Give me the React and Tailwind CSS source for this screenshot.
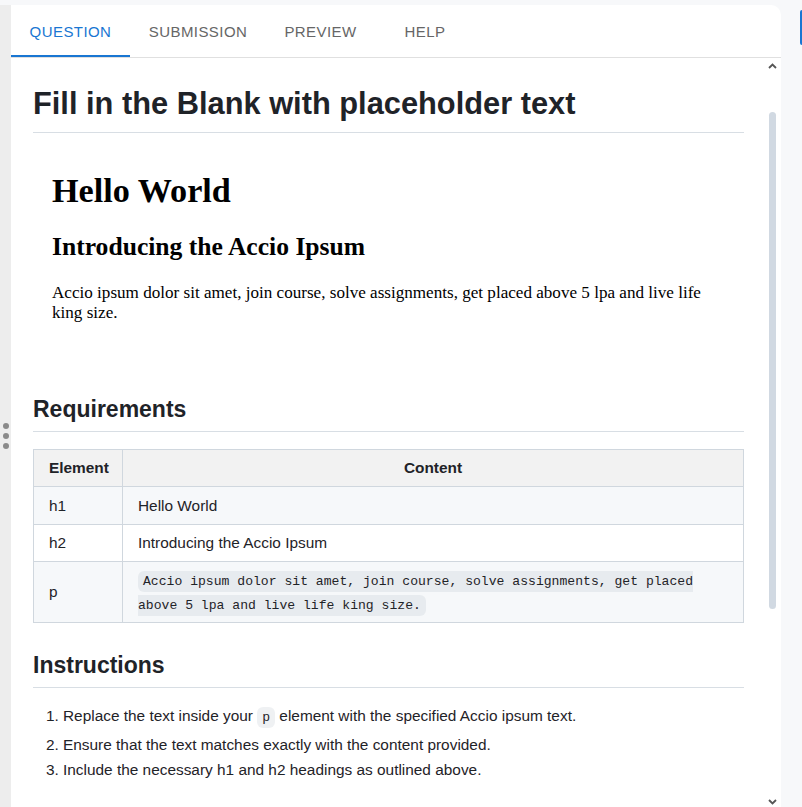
import React from 'react';

const tabs = [
  { label: 'Question', width: 'w-[119px]', active: true },
  { label: 'Submission', width: 'w-[136px]' },
  { label: 'Preview', width: 'w-[109px]' },
  { label: 'Help', width: 'w-[100px]' },
];

const rows = [
  { el: 'h1', content: 'Hello World', bg: 'bg-[#f6f8fa]', pad: 'py-[9.5px]' },
  { el: 'h2', content: 'Introducing the Accio Ipsum', bg: 'bg-white', pad: 'py-[9px]' },
];

function Chevron({ down }) {
  return (
    <svg width="9" height="6" viewBox="0 0 9 6" className={down ? 'rotate-180' : ''}>
      <path d="M1 5 L4.5 1.5 L8 5" fill="none" stroke="#555" strokeWidth="1.8" />
    </svg>
  );
}

function Code({ children, className = '' }) {
  return (
    <code
      className={`font-['Liberation_Mono',monospace] text-[13.1px] bg-[#afb8c133] rounded-md px-[5px] py-[3px] [box-decoration-break:slice] ${className}`}
    >
      {children}
    </code>
  );
}

export default function App() {
  return (
    <div className="w-[802px] h-[807px] bg-[#f7f8fa] flex overflow-hidden font-['Liberation_Sans',Arial,sans-serif] text-[#1f2328]">
      {/* resize handle strip */}
      <div className="w-[11px] mt-[5px] bg-[#ededed] flex flex-col items-center pt-[418px] gap-[4px]">
        <span className="w-[6px] h-[6px] rounded-full bg-[#8a8a8a]" />
        <span className="w-[6px] h-[6px] rounded-full bg-[#8a8a8a]" />
        <span className="w-[6px] h-[6px] rounded-full bg-[#8a8a8a]" />
      </div>

      <div className="w-[770px] mt-[5px] bg-white rounded-tr-[10px] flex flex-col">
        {/* tabs */}
        <div className="h-[53px] shrink-0 border-b border-[#e0e0e0] flex">
          {tabs.map((t) => (
            <div
              key={t.label}
              className={`${t.width} relative flex items-center justify-center pt-[2px] text-[15px] uppercase tracking-[0.02857em] ${
                t.active ? 'text-[#1976d2]' : 'text-[#666666]'
              }`}
            >
              {t.label}
              {t.active && <span className="absolute left-0 right-0 bottom-0 h-[2px] bg-[#1976d2]" />}
            </div>
          ))}
        </div>

        <div className="flex-1 flex overflow-hidden">
          <div className="w-[753px] pl-[22px] pr-[20px] pt-[26px] flex flex-col">
            <h1 className="text-[30.8px] leading-[39px] font-bold pb-[9px] border-b border-[#d8dee4]">
              Fill in the Blank with placeholder text
            </h1>

            {/* rendered preview */}
            <div className="px-[19px] pt-[39px] font-['Liberation_Serif','Times_New_Roman',serif] text-black">
              <h1 className="text-[34.2px] leading-[38px] font-bold">Hello World</h1>
              <h2 className="mt-[22px] text-[25.6px] leading-[29px] font-bold">Introducing the Accio Ipsum</h2>
              <p className="mt-[22px] text-[17.1px] leading-[20px]">
                Accio ipsum dolor sit amet, join course, solve assignments, get placed above 5 lpa and live life king size.
              </p>
            </div>

            <h2 className="mt-[72px] text-[23px] leading-[29px] font-bold pb-[7px] border-b border-[#d8dee4]">
              Requirements
            </h2>

            <table className="mt-[17px] w-full table-fixed border-collapse text-[15.4px]">
              <thead>
                <tr className="bg-[#f2f2f2]">
                  <th className="w-[89px] border border-[#d0d7de] px-[15px] py-[9px] leading-[18px] text-left font-bold">
                    Element
                  </th>
                  <th className="border border-[#d0d7de] px-[15px] py-[9px] leading-[18px] text-center font-bold">
                    Content
                  </th>
                </tr>
              </thead>
              <tbody>
                {rows.map((r) => (
                  <tr key={r.el} className={r.bg}>
                    <td className={`border border-[#d0d7de] px-[15px] ${r.pad} leading-[18px]`}>{r.el}</td>
                    <td className={`border border-[#d0d7de] px-[15px] ${r.pad} leading-[18px]`}>{r.content}</td>
                  </tr>
                ))}
                <tr className="bg-[#f6f8fa]">
                  <td className="border border-[#d0d7de] px-[15px] py-[6px] leading-[24px] align-middle">p</td>
                  <td className="border border-[#d0d7de] px-[15px] pt-[8px] pb-[4px] font-['Liberation_Mono',monospace] text-[13.1px] leading-[24px]">
                    <Code>
                      Accio ipsum dolor sit amet, join course, solve assignments, get placed above 5 lpa and live life king size.
                    </Code>
                  </td>
                </tr>
              </tbody>
            </table>

            <h2 className="mt-[28px] text-[23px] leading-[29px] font-bold pb-[7px] border-b border-[#d8dee4]">
              Instructions
            </h2>

            <ol className="mt-[16px] pl-[30px] list-decimal text-[15.4px] leading-[24px]">
              <li>
                Replace the text inside your <Code className="px-[4.5px]">p</Code> element with the specified Accio ipsum text.
              </li>
              <li className="mt-[3px]">Ensure that the text matches exactly with the content provided.</li>
              <li className="mt-[1px]">Include the necessary h1 and h2 headings as outlined above.</li>
            </ol>
          </div>

          {/* scrollbar */}
          <div className="w-[17px] flex flex-col items-center pt-[5px] pb-[2px]">
            <Chevron />
            <div className="mt-[43px] h-[497px] w-[7px] rounded-full bg-[#d1d9e2]" />
            <div className="flex-1" />
            <Chevron down />
          </div>
        </div>
      </div>

      <div className="flex-1 flex justify-end">
        <div className="mt-[10px] w-[2px] h-[35px] bg-[#1976d2] rounded-l-[2px]" />
      </div>
    </div>
  );
}
